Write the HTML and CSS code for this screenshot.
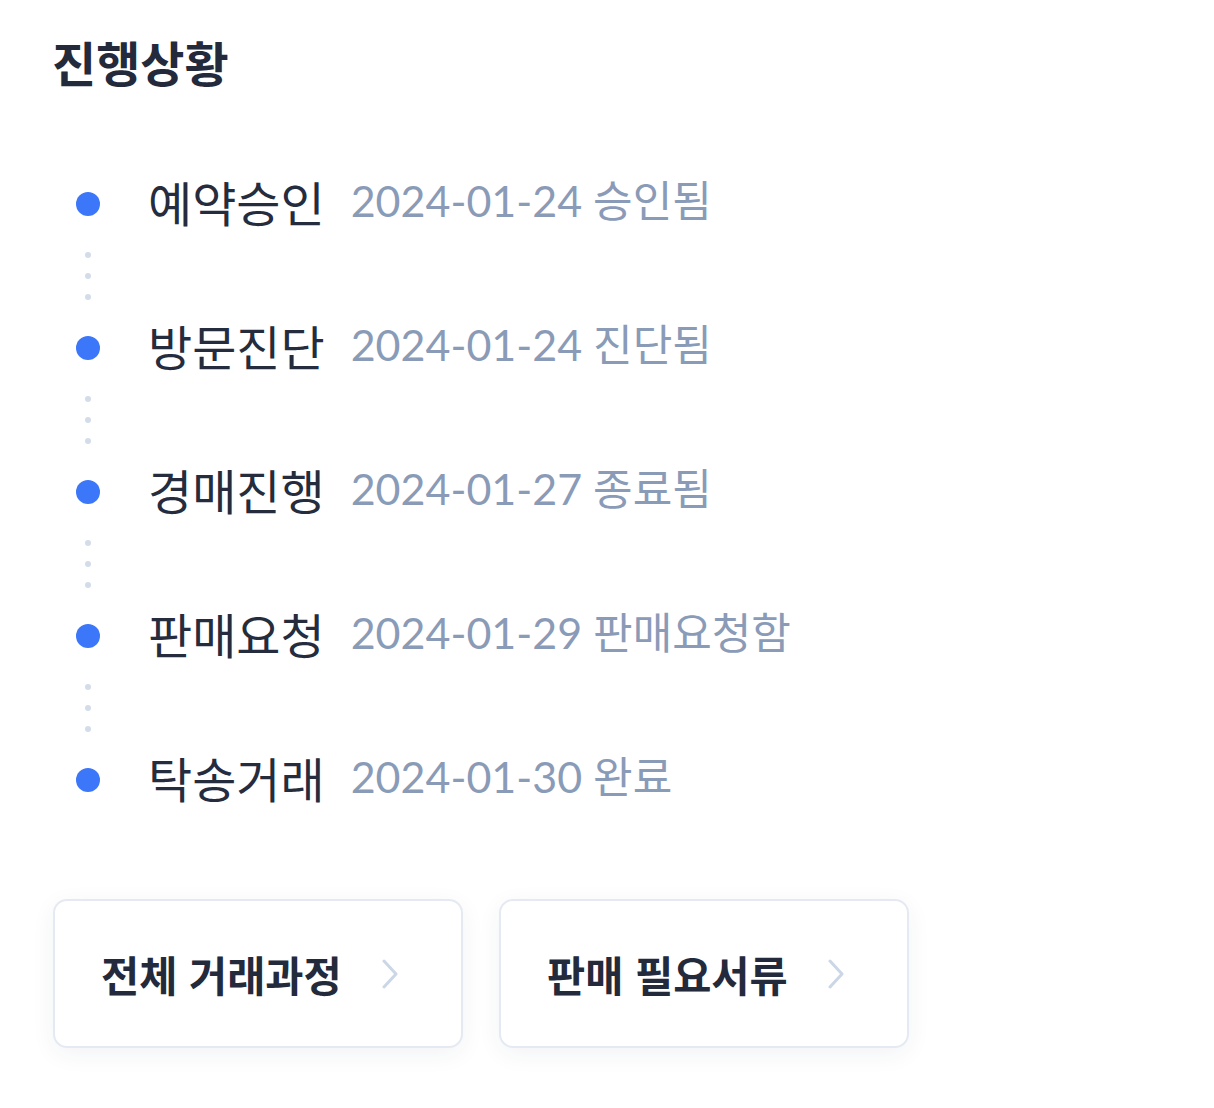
FILE: index.html
```html
<!DOCTYPE html>
<html lang="ko">
<head>
<meta charset="utf-8">
<title>진행상황</title>
<link rel="stylesheet" href="styles.css">
</head>
<body>
<main class="page">
  <h1 class="title">진행상황</h1>
  <ol class="timeline">
    <li class="step">
      <span class="dot"></span>
      <span class="label">예약승인</span>
      <span class="date">2024-01-24 승인됨</span>
    </li>
    <li class="connector"><i></i><i></i><i></i></li>
    <li class="step">
      <span class="dot"></span>
      <span class="label">방문진단</span>
      <span class="date">2024-01-24 진단됨</span>
    </li>
    <li class="connector"><i></i><i></i><i></i></li>
    <li class="step">
      <span class="dot"></span>
      <span class="label">경매진행</span>
      <span class="date">2024-01-27 종료됨</span>
    </li>
    <li class="connector"><i></i><i></i><i></i></li>
    <li class="step">
      <span class="dot"></span>
      <span class="label">판매요청</span>
      <span class="date">2024-01-29 판매요청함</span>
    </li>
    <li class="connector"><i></i><i></i><i></i></li>
    <li class="step">
      <span class="dot"></span>
      <span class="label">탁송거래</span>
      <span class="date">2024-01-30 완료</span>
    </li>
  </ol>
  <div class="actions">
    <button class="action" type="button">
      <span>전체 거래과정</span>
      <svg class="chev" width="16" height="30" viewBox="0 0 16 30"><path d="M2 2 L14 15 L2 28" fill="none" stroke="#cbd6e7" stroke-width="3" stroke-linecap="round" stroke-linejoin="round"/></svg>
    </button>
    <button class="action" type="button">
      <span>판매 필요서류</span>
      <svg class="chev" width="16" height="30" viewBox="0 0 16 30"><path d="M2 2 L14 15 L2 28" fill="none" stroke="#cbd6e7" stroke-width="3" stroke-linecap="round" stroke-linejoin="round"/></svg>
    </button>
  </div>
</main>
</body>
</html>
```
FILE: styles.css
```css
* { box-sizing: border-box; }
html, body { margin: 0; padding: 0; background: #ffffff; }
body {
  font-family: Lato, "Noto Sans CJK KR", sans-serif;
  color: #242b3d;
}
.page {
  padding: 30px 0 40px 52px;
}
.title {
  margin: 0;
  font-family: "Noto Sans CJK KR", sans-serif;
  font-size: 48px;
  font-weight: 700;
  line-height: 62px;
  color: #232a3c;
}
.timeline {
  list-style: none;
  margin: 82px 0 0 0;
  padding: 0;
}
.step {
  display: flex;
  align-items: center;
  height: 60px;
}
.dot {
  width: 24px;
  height: 24px;
  border-radius: 50%;
  background: #3c76f9;
  margin-left: 24px;
  margin-right: 48px;
  flex: none;
}
.label {
  font-family: "Noto Sans CJK KR", sans-serif;
  font-size: 48px;
  font-weight: 400;
  color: #252c3e;
  line-height: 60px;
  margin-bottom: 6px;
}
.date {
  margin-left: 26px;
  margin-bottom: 6px;
  font-size: 43px;
  color: #8a9bb8;
  line-height: 60px;
}
.connector {
  display: flex;
  flex-direction: column;
  gap: 15px;
  padding: 18px 0 18px 33px;
  height: 84px;
}
.connector i {
  display: block;
  width: 6px;
  height: 6px;
  border-radius: 50%;
  background: #d4dce9;
}
.actions {
  display: flex;
  gap: 36px;
  margin-top: 89px;
  padding-left: 1px;
}
.action {
  display: flex;
  align-items: center;
  gap: 40px;
  width: 410px;
  height: 149px;
  padding: 0 0 0 46px;
  background: #ffffff;
  border: 2px solid #e5eaf2;
  border-radius: 14px;
  box-shadow: 0 6px 24px rgba(30, 45, 80, 0.06);
  font-family: "Noto Sans CJK KR", sans-serif;
  font-size: 41.5px;
  font-weight: 700;
  color: #232a3c;
  cursor: pointer;
}
.chev { flex: none; }
```
